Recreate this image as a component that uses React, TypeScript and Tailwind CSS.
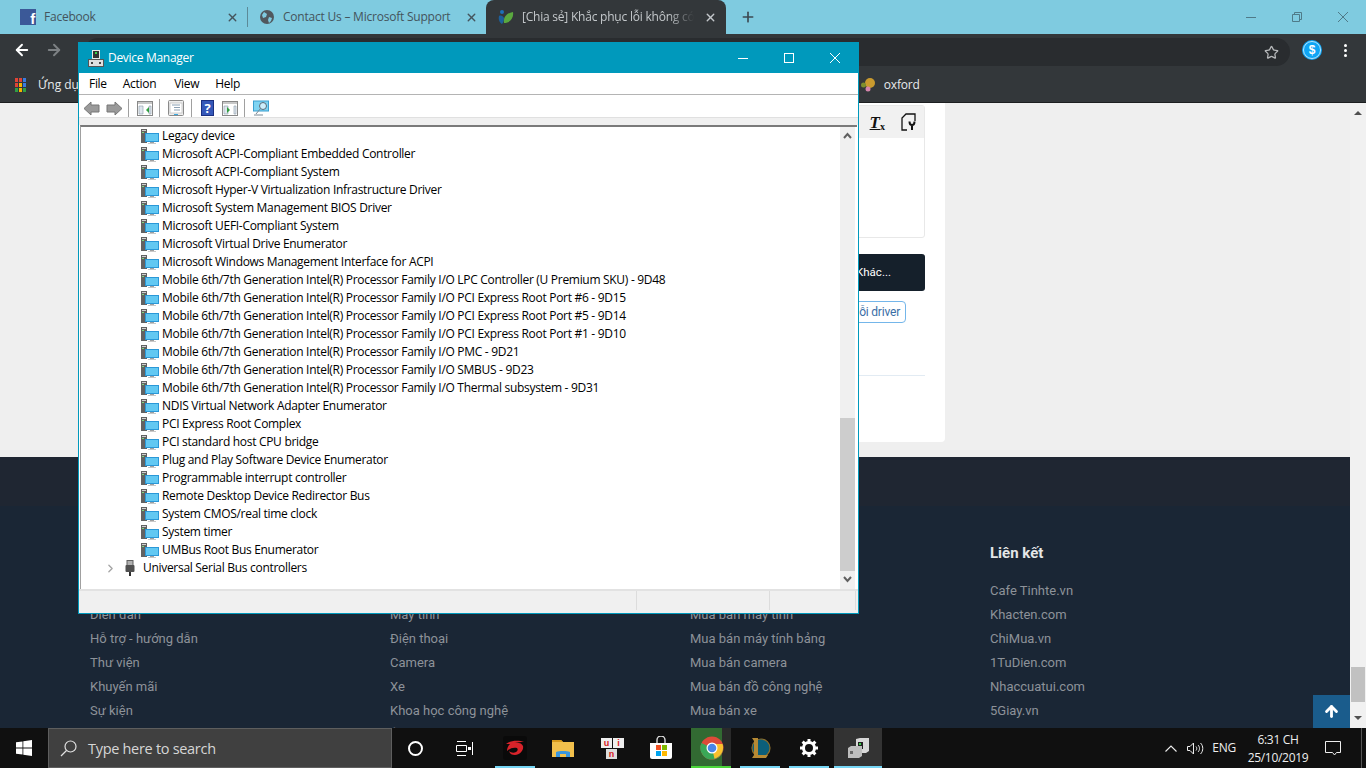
import { ArrowLeft, ArrowRight, Plus, Star, X, ArrowUp, ChevronRight } from 'lucide-react';

const devices = [
  'Legacy device',
  'Microsoft ACPI-Compliant Embedded Controller',
  'Microsoft ACPI-Compliant System',
  'Microsoft Hyper-V Virtualization Infrastructure Driver',
  'Microsoft System Management BIOS Driver',
  'Microsoft UEFI-Compliant System',
  'Microsoft Virtual Drive Enumerator',
  'Microsoft Windows Management Interface for ACPI',
  'Mobile 6th/7th Generation Intel(R) Processor Family I/O LPC Controller (U Premium SKU) - 9D48',
  'Mobile 6th/7th Generation Intel(R) Processor Family I/O PCI Express Root Port #6 - 9D15',
  'Mobile 6th/7th Generation Intel(R) Processor Family I/O PCI Express Root Port #5 - 9D14',
  'Mobile 6th/7th Generation Intel(R) Processor Family I/O PCI Express Root Port #1 - 9D10',
  'Mobile 6th/7th Generation Intel(R) Processor Family I/O PMC - 9D21',
  'Mobile 6th/7th Generation Intel(R) Processor Family I/O SMBUS - 9D23',
  'Mobile 6th/7th Generation Intel(R) Processor Family I/O Thermal subsystem - 9D31',
  'NDIS Virtual Network Adapter Enumerator',
  'PCI Express Root Complex',
  'PCI standard host CPU bridge',
  'Plug and Play Software Device Enumerator',
  'Programmable interrupt controller',
  'Remote Desktop Device Redirector Bus',
  'System CMOS/real time clock',
  'System timer',
  'UMBus Root Bus Enumerator',
];

const footerCols = [
  ['Diễn đàn', 'Hỗ trợ - hướng dẫn', 'Thư viện', 'Khuyến mãi', 'Sự kiện'],
  ['Máy tính', 'Điện thoại', 'Camera', 'Xe', 'Khoa học công nghệ', 'Âm thanh'],
  ['Mua bán máy tính', 'Mua bán máy tính bảng', 'Mua bán camera', 'Mua bán đồ công nghệ', 'Mua bán xe'],
];

const links = ['Cafe Tinhte.vn', 'Khacten.com', 'ChiMua.vn', '1TuDien.com', 'Nhaccuatui.com', '5Giay.vn'];

const appDots = [
  'bg-[#e04436]',
  'bg-[#e04436]',
  'bg-[#3b7be0]',
  'bg-[#e04436]',
  'bg-[#f4b400]',
  'bg-[#3b7be0]',
  'bg-[#2f9e44]',
  'bg-[#f4b400]',
  'bg-[#2f9e44]',
];

function DeviceIcon() {
  return (
    <svg width="18" height="16" viewBox="0 0 18 16" className="shrink-0">
      <rect x="0" y="1" width="6" height="14" fill="#626262" />
      <rect x="1" y="2" width="4" height="1" fill="#d0d0d0" />
      <rect x="1" y="4" width="2" height="1" fill="#7fd67f" />
      <rect x="4" y="5" width="14" height="9" fill="#2a98d8" />
      <rect x="5" y="6" width="12" height="7" fill="#62c8f2" />
      <rect x="9" y="14" width="4" height="1" fill="#a0a0a0" />
      <rect x="7" y="15" width="8" height="1" fill="#c8c8c8" />
    </svg>
  );
}

function UsbIcon() {
  return (
    <svg width="10" height="16" viewBox="0 0 10 16">
      <rect x="2" y="0.5" width="6" height="5" fill="#b0b0b0" stroke="#606060" />
      <rect x="0.5" y="5" width="9" height="7" rx="1" fill="#505050" />
      <rect x="4" y="12" width="2" height="4" fill="#303030" />
    </svg>
  );
}

function DevMgrIcon() {
  return (
    <svg width="16" height="17" viewBox="0 0 16 17">
      <rect x="4" y="0" width="8" height="9" fill="#e8e8e8" />
      <rect x="5" y="1" width="6" height="7" fill="#333" />
      <rect x="7" y="2" width="2" height="2" fill="#38d048" />
      <rect x="0.5" y="9.500" width="15" height="7" fill="#e0e0e0" stroke="#555" />
      <rect x="3" y="12" width="2" height="2" fill="#444" />
      <rect x="11" y="12" width="2" height="2" fill="#444" />
    </svg>
  );
}

function WindowGlyph({ arrow }: { arrow: string }) {
  return (
    <svg width="16" height="15" viewBox="0 0 16 15">
      <rect x="0.5" y="0.5" width="15" height="14" fill="#fff" stroke="#888" />
      <rect x="1" y="1" width="14" height="2" fill="#c8c8c8" />
      <path d="M2 5h4v8H2z" fill="#dfe6ee" stroke="#8c9aa8" strokeWidth="0.6" />
      <path d="M12 5h2v8h-2z" fill="#dfe6ee" stroke="#8c9aa8" strokeWidth="0.6" />
      <path d={arrow} fill="#2f9e3f" />
    </svg>
  );
}

function ToolbarArrow({ flip }: { flip?: boolean }) {
  return (
    <svg width="17" height="15" viewBox="0 0 17 15" className={flip ? 'scale-x-[-1]' : ''}>
      <path d="M1 7.5 8 1v3h8v7H8v3z" fill="#9a9a9a" stroke="#777" />
    </svg>
  );
}

function ToolSep() {
  return <div className="h-[18px] w-px bg-[#a0a0a0]" />;
}

function DeviceManager() {
  return (
    <div className="absolute left-[78px] top-[42px] flex h-[572px] w-[781px] flex-col border border-[#0099bc] bg-white font-['Open_Sans',sans-serif] text-[12px] tracking-[-0.3px] text-[#000]">
      <div className="flex h-[30px] shrink-0 items-center bg-[#0099bc] text-white">
        <div className="ml-[9px] w-[20px]">
          <DevMgrIcon />
        </div>
        <span>Device Manager</span>
        <div className="ml-auto flex items-center">
          <div className="flex h-[30px] w-[46px] items-center justify-center">
            <div className="h-px w-[10px] bg-white" />
          </div>
          <div className="flex h-[30px] w-[46px] items-center justify-center">
            <div className="h-[10px] w-[10px] border border-white" />
          </div>
          <div className="flex h-[30px] w-[46px] items-center justify-center">
            <svg width="10" height="10" viewBox="0 0 10 10" stroke="#fff" fill="none">
              <path d="M0 0l10 10M10 0L0 10" />
            </svg>
          </div>
        </div>
      </div>

      <div className="flex h-[22px] shrink-0 items-center border-b border-[#b4b4b4] text-[#000]">
        <span className="ml-[10px]">File</span>
        <span className="ml-[16px]">Action</span>
        <span className="ml-[18px]">View</span>
        <span className="ml-[16px]">Help</span>
      </div>

      <div className="flex h-[23px] shrink-0 items-center border-b border-[#e0e0e0] pt-[4px]">
        <div className="ml-[4px]"><ToolbarArrow /></div>
        <div className="ml-[6px]"><ToolbarArrow flip /></div>
        <div className="ml-[5px]"><ToolSep /></div>
        <div className="ml-[8px]"><WindowGlyph arrow="M12 6l-3 3 3 3z" /></div>
        <div className="ml-[6px]"><ToolSep /></div>
        <div className="ml-[8px]">
          <svg width="16" height="16" viewBox="0 0 16 16">
            <rect x="0.5" y="0.5" width="15" height="15" rx="1" fill="#eee" stroke="#8a8a8a" />
            <rect x="2" y="3" width="12" height="10" fill="#fff" stroke="#b0b0b0" strokeWidth="0.6" />
            <path d="M4 5h8M6 7.5h6M6 10h6" stroke="#8aa0b4" />
            <rect x="6" y="14" width="4" height="1" fill="#3aa8e0" />
          </svg>
        </div>
        <div className="ml-[7px]"><ToolSep /></div>
        <div className="ml-[9px] flex h-[16px] w-[13px] items-center justify-center border border-[#1a2f80] bg-[#3457b8] text-[13px] font-bold leading-none text-white">?</div>
        <div className="ml-[8px]"><WindowGlyph arrow="M5 6l3 3-3 3z" /></div>
        <div className="ml-[6px]"><ToolSep /></div>
        <div className="ml-[8px]">
          <svg width="16" height="16" viewBox="0 0 16 16" fill="none">
            <rect x="0.5" y="1" width="15" height="10" fill="#7fd4f2" stroke="#3a9fd0" />
            <circle cx="10" cy="6" r="3.5" fill="#cdeefb" stroke="#5a6a78" />
            <path d="M7.5 8.5 3 14M1 15h9" stroke="#7a8894" />
          </svg>
        </div>
      </div>

      <div className="h-[7px] shrink-0 bg-[#f0f0f0]" />

      <div className="ml-[1px] mr-[1px] flex min-h-0 flex-1 border-l border-t-2 border-l-[#a0a0a0] border-t-[#7a7a7a]">
        <div className="flex-1 overflow-hidden">
          <ul className="pl-[60px]">
            {devices.map((name) => (
              <li key={name} className="flex h-[18px] items-center gap-[3px] whitespace-nowrap">
                <DeviceIcon />
                <span>{name}</span>
              </li>
            ))}
          </ul>
          <div className="flex h-[18px] items-center whitespace-nowrap pl-[23px]">
            <ChevronRight size={13} strokeWidth={2.5} className="text-[#a6a6a6]" />
            <div className="mx-[8px] flex"><UsbIcon /></div>
            <span>Universal Serial Bus controllers</span>
          </div>
        </div>
        <div className="mr-[2px] flex w-[15px] shrink-0 flex-col bg-[#f0f0f0] pt-[1px]">
          <div className="flex h-[15px] items-center justify-center">
            <svg width="9" height="7" viewBox="0 0 9 7" fill="none" stroke="#606060" strokeWidth="2">
              <path d="M1 6l3.5-4L8 6" />
            </svg>
          </div>
          <div className="mt-[275px] h-[153px] bg-[#cdcdcd]" />
          <div className="flex h-[17px] items-center justify-center">
            <svg width="9" height="7" viewBox="0 0 9 7" fill="none" stroke="#606060" strokeWidth="2">
              <path d="M1 1l3.5 4L8 1" />
            </svg>
          </div>
        </div>
      </div>

      <div className="flex h-[24px] shrink-0 border-t-2 border-t-[#e2e2e2] bg-[#f0f0f0] pb-[3px]">
        <div className="w-[558px] border-r border-[#dcdcdc]" />
        <div className="w-[133px] border-r border-[#dcdcdc]" />
        <div className="w-[86px] border-r border-[#dcdcdc]" />
      </div>
    </div>
  );
}

function TabBar() {
  return (
    <div className="flex h-[34px] shrink-0 items-end bg-[#7fcbe0] font-['Open_Sans',sans-serif] text-[12px] tracking-[-0.22px] text-[#44545c]">
      <div className="flex h-[34px] w-[247px] items-center pl-[20px]">
        <div className="relative h-4 w-4 bg-[#3b5998]">
          <span className="absolute bottom-[-1px] right-[1px] font-['Liberation_Sans',sans-serif] text-[15px] font-bold leading-none text-white">f</span>
        </div>
        <span className="ml-[8px]">Facebook</span>
        <X size={13} strokeWidth={2.5} className="ml-auto mr-[8px]" />
      </div>
      <div className="h-[20px] w-px self-center bg-[#5c8a98]" />
      <div className="flex h-[34px] w-[238px] items-center pl-[12px]">
        <svg width="14" height="14" viewBox="0 0 14 14">
          <circle cx="7" cy="7" r="7" fill="#50585e" />
          <path d="M4 2l3 2-1 3-3 1-1-3zM9 7l3 1-1 3-2 2-1-3z" fill="#7fcbe0" />
        </svg>
        <span className="ml-[9px] whitespace-nowrap">Contact Us – Microsoft Support</span>
        <X size={13} strokeWidth={2.5} className="ml-auto mr-[8px]" />
      </div>
      <div className="flex h-[34px] w-[240px] items-center rounded-t-[8px] bg-[#33373a] pl-[12px] text-[#c4c8cb]">
        <svg width="16" height="16" viewBox="0 0 16 16">
          <circle cx="4" cy="3" r="2" fill="#1d70b8" />
          <path d="M1 7c2-1 4 0 5 2 0 3-1 5-2 6-2-1-4-4-3-8z" fill="#1d5f9a" />
          <path d="M6 14C5 8 9 4 15 3c1 6-3 11-9 11z" fill="#5aa83f" />
        </svg>
        <span className="ml-[8px] w-[172px] overflow-hidden whitespace-nowrap [mask-image:linear-gradient(to_right,black_85%,transparent)]">
          [Chia sẻ] Khắc phục lỗi không có âm thanh
        </span>
        <X size={13} strokeWidth={2.5} className="ml-[10px]" />
      </div>
      <div className="ml-[14px] flex h-[34px] items-center">
        <Plus size={16} strokeWidth={2.5} className="text-[#3c4a52]" />
      </div>
      <div className="ml-auto flex h-[34px] items-center">
        <div className="flex w-[46px] justify-center">
          <div className="h-px w-[10px] bg-[#4f7a88]" />
        </div>
        <div className="flex w-[46px] justify-center">
          <svg width="10" height="10" viewBox="0 0 10 10" fill="none" stroke="#4f7a88">
            <path d="M.5 2.500h7v7h-7zM2.500 2.500v-2h7v7h-2" />
          </svg>
        </div>
        <div className="flex w-[46px] justify-center">
          <svg width="10" height="10" viewBox="0 0 10 10" stroke="#4f7a88" fill="none">
            <path d="M0 0l10 10M10 0L0 10" />
          </svg>
        </div>
      </div>
    </div>
  );
}

function BrowserToolbar() {
  return (
    <div className="flex h-[32px] shrink-0 items-center bg-[#33373a]">
      <ArrowLeft size={18} strokeWidth={2.5} className="ml-[13px] text-white" />
      <ArrowRight size={18} strokeWidth={2.5} className="ml-[14px] text-[#7d8184]" />
      <div className="ml-[21px] flex h-[28px] flex-1 items-center justify-end self-end rounded-full bg-[#292c2f] pr-[11px]">
        <Star size={15} strokeWidth={2} className="text-[#b8babc]" />
      </div>
      <div className="ml-[12px] flex h-[20px] w-[20px] items-center justify-center rounded-full border-2 border-[#0ea5f5] bg-[#0ea5f5] font-['Liberation_Sans',sans-serif] text-[12px] font-bold text-white outline outline-1 outline-offset-[-2px] outline-white/70">
        $
      </div>
      <div className="ml-[22px] mr-[19px] flex flex-col gap-[2px]">
        <div className="h-[3px] w-[3px] rounded-full bg-white" />
        <div className="h-[3px] w-[3px] rounded-full bg-white" />
        <div className="h-[3px] w-[3px] rounded-full bg-white" />
      </div>
    </div>
  );
}

function BookmarksBar() {
  return (
    <div className="flex h-[37px] shrink-0 items-center border-b border-[#1c1e20] bg-[#33373a] pt-[1px] font-['Open_Sans',sans-serif] text-[12px] text-[#e8eaec]">
      <div className="ml-[15px] grid grid-cols-3 gap-[1px]">
        {appDots.map((c, i) => (
          <div key={i} className={`h-[4px] w-[3px] ${c}`} />
        ))}
      </div>
      <span className="ml-[12px]">Ứng dụng</span>
      <div className="ml-[767px] w-[16px]">
        <svg width="16" height="16" viewBox="0 0 16 16">
          <circle cx="10" cy="6" r="5" fill="#c99a2e" />
          <circle cx="3.5" cy="8" r="2.5" fill="#7e8f2c" />
          <circle cx="8" cy="12" r="2.5" fill="#d685ac" />
        </svg>
      </div>
      <span className="ml-[8px] tracking-[-0.2px]">oxford</span>
    </div>
  );
}

function Page() {
  return (
    <div className="relative flex min-h-0 flex-1 flex-col overflow-hidden bg-[#efefef]">
      <div className="flex h-[339px] shrink-0 justify-end pr-[421px]">
        <div className="flex w-[600px] flex-col rounded-b-[4px] bg-white pr-[20px] font-['Roboto',sans-serif]">
          <div className="mt-[2px] h-[133px] rounded-[3px] border border-[#e8e8e8]">
            <div className="flex h-[32px] items-center justify-end gap-[16px] bg-[#f1f1f1] pr-[7px]">
              <span className="font-['Liberation_Serif',serif] text-[17px] font-bold italic leading-none text-[#111] underline">
                T<sub className="text-[10px] not-italic">x</sub>
              </span>
              <svg width="16" height="18" viewBox="0 0 16 18" fill="none" stroke="#111" strokeWidth="1.3">
                <path d="M14 8V1H5L1 5v12h5" />
                <path d="M8.500 8.500c0 2.500 1 3.500 2.500 3.500s2.500-1 2.500-3.500M11 12v5" strokeWidth="2" />
              </svg>
            </div>
          </div>
          <div className="mt-[16px] flex h-[37px] items-center justify-end rounded-[3px] bg-[#15202b] pr-[34px] text-[11.5px] text-white">
            Khắc phục lỗi không có âm thanh trên Windows 10 Khác...
          </div>
          <div className="mt-[10px] flex justify-end pr-[19px]">
            <span className="rounded-[4px] border border-[#74b6ea] px-[5px] py-[3px] text-[12px] leading-[14px] tracking-[-0.2px] text-[#3a6ea5]">
              lỗi driver
            </span>
          </div>
          <div className="mt-[52px] h-px bg-[#e2ebf3]" />
        </div>
      </div>
      <div className="mt-[15px] flex-1 bg-[#1a2635] font-['Roboto',sans-serif] text-[13px] text-[#8d9299]">
        <div className="h-[49px] bg-[#1f2632]" />
        <div className="flex pl-[90px] pt-[35px]">
          {footerCols.map((col, i) => (
            <ul key={i} className="w-[300px] pt-[62px]">
              {col.map((item) => (
                <li key={item} className="flex h-[24px] items-center whitespace-nowrap">{item}</li>
              ))}
            </ul>
          ))}
          <div>
            <div className="flex h-[24px] items-center text-[15px] font-bold text-[#e4e6e8]">Liên kết</div>
            <ul className="mt-[14px]">
              {links.map((item) => (
                <li key={item} className="flex h-[24px] items-center whitespace-nowrap">{item}</li>
              ))}
            </ul>
          </div>
        </div>
      </div>
      <div className="absolute right-0 top-0 flex h-full w-[16px] flex-col items-center bg-[#f1f1f1]">
        <div className="mt-[8px] h-0 w-0 border-x-[4px] border-b-[4px] border-x-transparent border-b-[#505050]" />
        <div className="mt-[552px] h-[35px] w-[14px] bg-[#c1c1c1]" />
        <div className="mt-[14px] h-0 w-0 border-x-[4px] border-t-[4px] border-x-transparent border-t-[#505050]" />
      </div>
      <div className="absolute bottom-0 right-[16px] flex h-[33px] w-[37px] items-center justify-center bg-[#1a5c8c]">
        <ArrowUp size={17} strokeWidth={4} className="text-white" />
      </div>
    </div>
  );
}

function TaskApp({ w, bar, bg, children }: { w: string; bar?: string; bg?: string; children: React.ReactNode }) {
  return (
    <div className={`relative flex h-[40px] shrink-0 items-center justify-center ${w} ${bg ?? ''}`}>
      {children}
      {bar && <div className={`absolute bottom-0 left-0 right-0 h-[2px] ${bar}`} />}
    </div>
  );
}

function Taskbar() {
  return (
    <div className="flex h-[40px] shrink-0 items-center bg-[#101010] font-['Open_Sans',sans-serif] text-white">
      <div className="flex h-[40px] w-[48px] items-center justify-center">
        <svg width="16" height="16" viewBox="0 0 16 16" fill="#fff">
          <path d="M0 2.300 6.500 1.400v6.200H0zM7.300 1.300 16 0v7.600H7.300zM0 8.400h6.500v6.200L0 13.700zM7.300 8.400H16V16l-8.700-1.300z" />
        </svg>
      </div>
      <div className="flex h-[40px] w-[344px] items-center border border-[#5e5e5e] bg-[#404040] pt-[1px] text-[14.5px] tracking-[-0.3px] text-[#d6d6d6]">
        <svg width="17" height="17" viewBox="0 0 17 17" fill="none" stroke="#e0e0e0" strokeWidth="1.2" className="ml-[11px]">
          <circle cx="10.5" cy="6.5" r="5.5" />
          <path d="M6.500 10.500 1 16" />
        </svg>
        <span className="ml-[11px]">Type here to search</span>
      </div>
      <div className="flex w-[48px] justify-center pr-[1px]">
        <div className="h-[15px] w-[15px] rounded-full border-2 border-white" />
      </div>
      <div className="flex w-[47px] justify-center pl-[1px]">
        <svg width="17" height="15" viewBox="0 0 17 15" fill="none" stroke="#fff">
          <path d="M.5 4.500h10v6H.5zM1 .5h9M1 14.500h9M16.500 1v13" />
          <rect x="12" y="6" width="3" height="3" fill="#fff" stroke="none" />
        </svg>
      </div>
      <TaskApp w="w-[40px] ml-[8px]" bar="bg-[#76d6f5]">
        <div className="flex h-[24px] w-[24px] items-center justify-center rounded-[3px] bg-[#0a0a0a]">
          <svg width="20" height="16" viewBox="0 0 20 16" fill="#d8232a">
            <path d="M1 4C6 0 14 0 19 2c-4 0-7 0-10 1 4-1 8 0 9 3 1 4-3 9-8 9-3 0-5-1-6-4 2 2 5 2 7 1 2-1 2-3 1-4-3-1-7 0-10 3 0-3 1-5 3-7-2 0-3 0-4 0z" />
          </svg>
        </div>
      </TaskApp>
      <TaskApp w="w-[48px] ml-[4px]">
        <svg width="22" height="19" viewBox="0 0 22 19">
          <path d="M0 1h9l2 2h11v15H0z" fill="#f2c04c" />
          <path d="M0 1h9l2 2H0z" fill="#d89a1c" />
          <path d="M4 18V13c2-1 4-1 7-1s5 0 7 1v5h-4v-3H8v3z" fill="#3a96dd" />
        </svg>
      </TaskApp>
      <TaskApp w="w-[50px]">
        <div className="relative h-[24px] w-[24px]">
          <div className="absolute left-[1px] top-[2px] flex h-[10px] w-[11px] items-center justify-center bg-[#eee] font-['Liberation_Sans',sans-serif] text-[9px] font-bold leading-none text-[#d82020]">u</div>
          <div className="absolute right-0 top-[2px] flex h-[10px] w-[11px] items-center justify-center bg-[#eee] font-['Liberation_Sans',sans-serif] text-[9px] font-bold leading-none text-[#d82020]">i</div>
          <div className="absolute left-[6px] top-[13px] flex h-[10px] w-[11px] items-center justify-center bg-[#ddd] font-['Liberation_Sans',sans-serif] text-[9px] font-bold leading-none text-[#d82020]">n</div>
        </div>
      </TaskApp>
      <TaskApp w="w-[48px]">
        <svg width="24" height="24" viewBox="0 0 24 24">
          <path d="M8 7V4a4 4 0 0 1 8 0v3" fill="none" stroke="#ddd" strokeWidth="1.4" />
          <path d="M1 7h22v14a2 2 0 0 1-2 2H3a2 2 0 0 1-2-2z" fill="#fff" />
          <rect x="7" y="9" width="5" height="5" fill="#f25022" />
          <rect x="13" y="9" width="5" height="5" fill="#7fba00" />
          <rect x="7" y="15" width="5" height="5" fill="#00a4ef" />
          <rect x="13" y="15" width="5" height="5" fill="#ffb900" />
        </svg>
      </TaskApp>
      <div className="relative ml-[6px] flex h-[40px] w-[40px] items-center">
        <div className="absolute inset-y-0 left-0 w-[31px] bg-[#326a32]" />
        <div className="absolute inset-y-0 left-[31px] right-0 bg-[#2a2a2a]" />
        <div className="absolute bottom-0 left-0 right-0 h-[2px] bg-[#4bd53a]" />
        <svg width="24" height="24" viewBox="0 0 24 24" className="relative ml-[9px]">
          <circle cx="12" cy="12" r="11.5" fill="#dd4b39" />
          <path d="M12 12 2 18a11.5 11.5 0 0 1-.5-11z" fill="#3aa757" />
          <path d="M2 18a11.5 11.5 0 0 0 10 5.500c6 0 11-5 11-11.500 0-1-.2-3-1-4H12z" fill="#3aa757" />
          <path d="M12 8h10.500a11.500 11.500 0 0 1-8 14.700L12 12z" fill="#fbc02d" />
          <circle cx="12" cy="12" r="5.500" fill="#fff" />
          <circle cx="12" cy="12" r="4.300" fill="#4a86e8" />
        </svg>
      </div>
      <TaskApp w="w-[40px] ml-[9px]" bar="bg-[#76d6f5]">
        <svg width="22" height="24" viewBox="0 0 22 24" fill="none">
          <circle cx="12" cy="12" r="9" fill="#0c5f7a" stroke="#8a6d2c" strokeWidth="1.2" />
          <path d="M3 2h6v17h10l-2 3H3l2-3V5z" fill="#b78a34" />
        </svg>
      </TaskApp>
      <TaskApp w="w-[40px] ml-[9px]" bar="bg-[#76d6f5]">
        <svg width="18" height="18" viewBox="0 0 18 18">
          <circle cx="9" cy="9" r="5.500" fill="none" stroke="#fff" strokeWidth="3" />
          <path d="M9 0v4M9 14v4M0 9h4M14 9h4M2.600 2.600l2.800 2.800M12.600 12.600l2.800 2.800M15.400 2.600l-2.800 2.800M5.400 12.600l-2.800 2.800" stroke="#fff" strokeWidth="3" />
        </svg>
      </TaskApp>
      <TaskApp w="w-[48px] ml-[5px]" bg="bg-[#333333]" bar="bg-[#76d6f5]">
        <svg width="23" height="20" viewBox="0 0 23 20">
          <path d="M9 1l4-1h9v13l-3 2H9z" fill="#d8d8d8" />
          <rect x="11" y="4" width="5" height="7" fill="#222" />
          <rect x="12" y="5" width="2" height="2" fill="#38d048" />
          <path d="M1 10l3-2h11v10l-3 2H1z" fill="#bdbdbd" />
          <rect x="3" y="13" width="3" height="3" fill="#666" />
        </svg>
      </TaskApp>
      <div className="ml-auto flex h-[40px] items-center text-[12px] text-[#eee]">
        <svg width="12" height="7" viewBox="0 0 12 7" fill="none" stroke="#eee" strokeWidth="1.1">
          <path d="M.5 6.500 6 1l5.500 5.500" />
        </svg>
        <svg width="17" height="13" viewBox="0 0 17 13" fill="none" stroke="#eee" className="ml-[10px]">
          <path d="M.5 4.500h2.500L6.500 1v11L3 8.500H.5zM9 4.500c1 1 1 3 0 4M11 3c2 2 2 5 0 7M13.500 1c3 3 3 8 0 11" />
        </svg>
        <span className="ml-[8px] tracking-[-0.2px]">ENG</span>
        <div className="ml-[4px] flex w-[76px] flex-col items-center pt-[2px] text-[12px] leading-[18px] tracking-[-0.3px]">
          <span>6:31 CH</span>
          <span>25/10/2019</span>
        </div>
        <svg width="16" height="15" viewBox="0 0 16 15" fill="none" stroke="#eee" className="ml-[9px]">
          <path d="M.5.500h15v11h-4l-2 2.500-2-2.500H.5z" />
        </svg>
        <div className="ml-[20px] h-[40px] w-px bg-[#555]" />
        <div className="w-[4px]" />
      </div>
    </div>
  );
}

export default function App() {
  return (
    <div className="relative flex h-[768px] w-[1366px] flex-col overflow-hidden">
      <TabBar />
      <BrowserToolbar />
      <BookmarksBar />
      <Page />
      <Taskbar />
      <DeviceManager />
    </div>
  );
}
